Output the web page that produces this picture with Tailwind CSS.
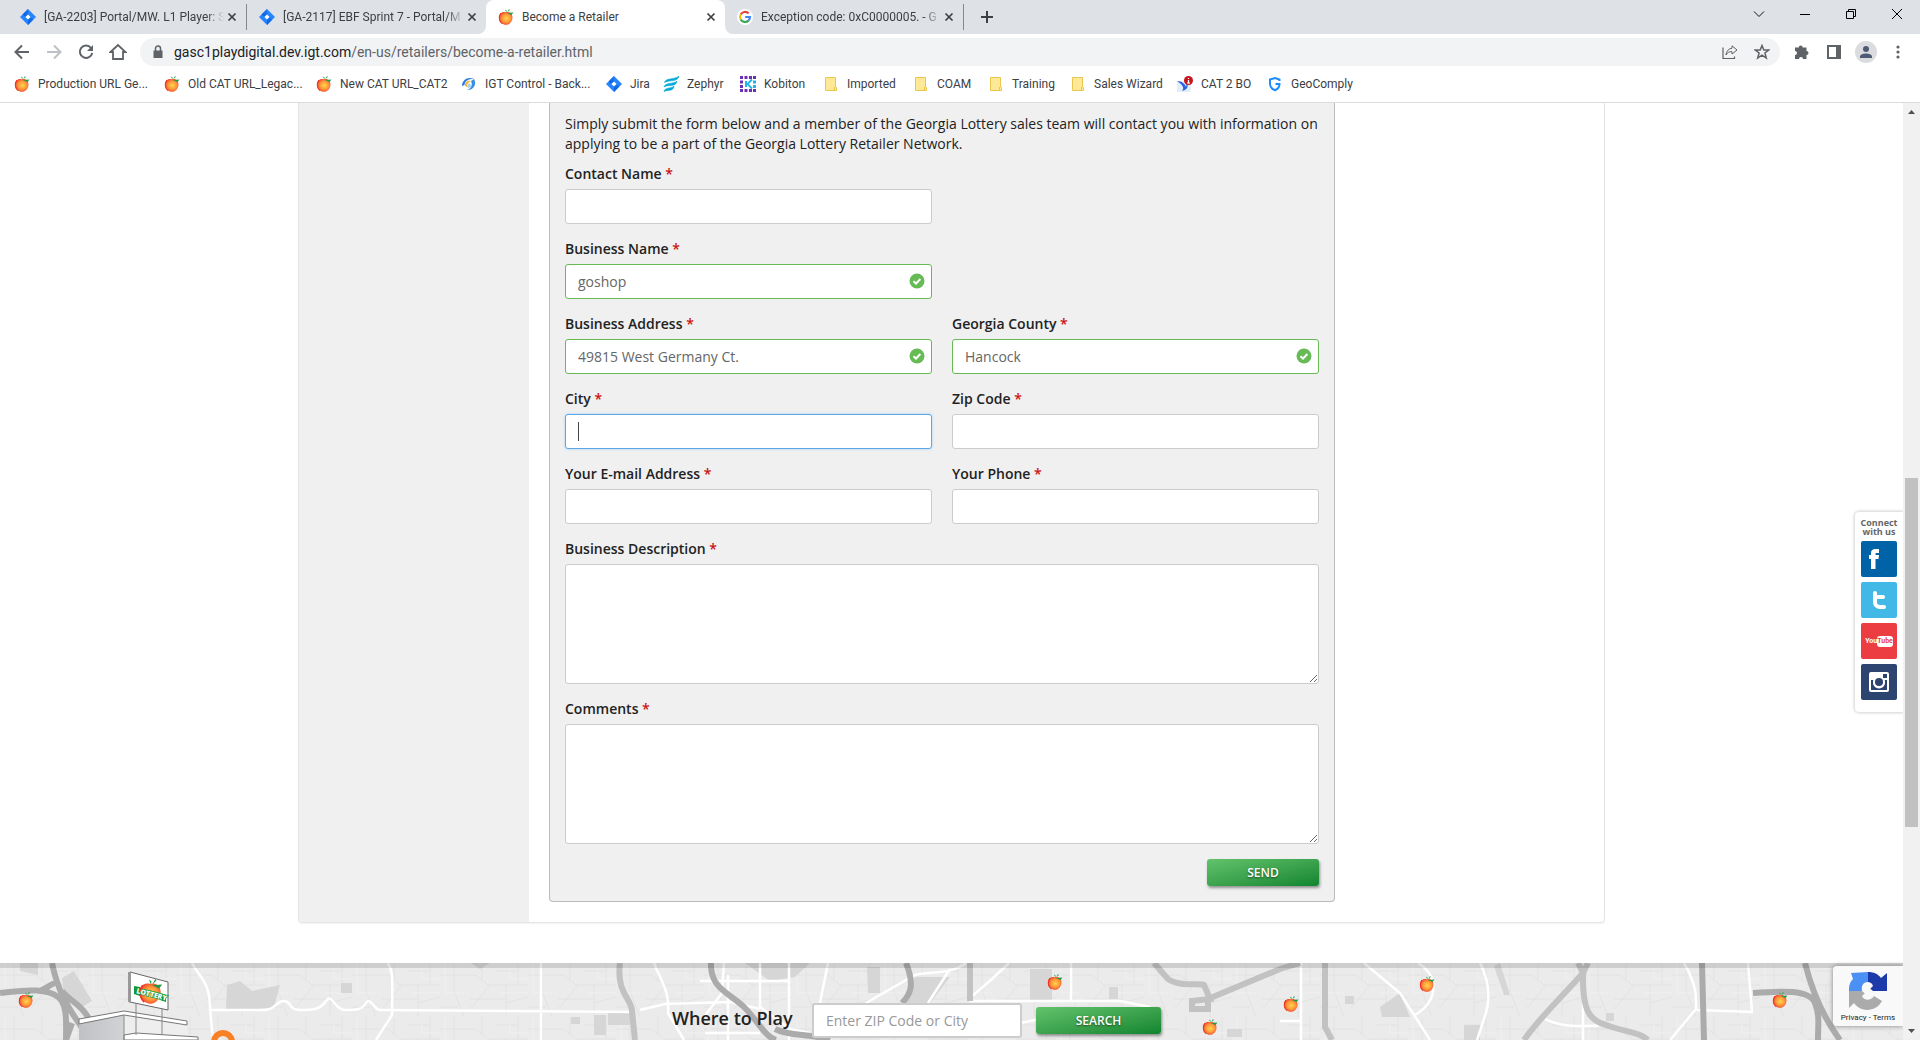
<!DOCTYPE html>
<html lang="en">
<head>
<meta charset="utf-8">
<meta name="viewport" content="width=device-width, initial-scale=1">
<title>Become a Retailer</title>
<script src="https://cdn.jsdelivr.net/npm/@tailwindcss/browser@4"></script>
</head>
<body class="h-screen flex flex-col overflow-hidden bg-white font-['Open_Sans',sans-serif] text-sm text-[#222]">

<svg class="absolute size-0" aria-hidden="true">
  <defs>
    <radialGradient id="peachFill" cx="55%" cy="50%" r="55%">
      <stop offset="0" stop-color="#ffd54a"/><stop offset=".55" stop-color="#ff9a3c"/><stop offset="1" stop-color="#f0442c"/>
    </radialGradient>
    <linearGradient id="wall" x1="0" x2="1"><stop offset="0" stop-color="#bfc1c4"/><stop offset="1" stop-color="#ececee"/></linearGradient>
    <linearGradient id="jiraFold" x1="0" x2="1" y1="1" y2="0"><stop offset="0" stop-color="#0052cc"/><stop offset="1" stop-color="#2684ff"/></linearGradient>
    <symbol id="peach" viewBox="0 0 16 16">
      <path d="M8 3.2C11.500 2 14.500 4.500 14.500 8.500S11.500 15.800 8 15.800 .8 13 .8 8.700 4 2 8 3.200Z" fill="url(#peachFill)"/>
      <path d="M3 4C.8 7 .8 12 4 14.800" stroke="#ee3124" fill="none"/>
      <path d="M9 4 15.500 3.500 13.500 6ZM8.300 3.500 7 .5 8.600 1.500ZM9.300 3.300 11 0l.8 1Z" fill="#1f9d45"/>
    </symbol>
    <symbol id="jira" viewBox="0 0 16 16">
      <path d="M8 0 16 8 8 16 0 8Z" fill="#2684ff"/>
      <path d="M8 0 8 5.400 5.400 8 2.600 5.400ZM8 16V10.600L10.600 8 13.400 10.600Z" fill="url(#jiraFold)"/>
      <path d="M8 5.400 10.600 8 8 10.600 5.400 8Z" fill="#fff"/>
    </symbol>
    <symbol id="folder" viewBox="0 0 16 16">
      <path d="M2.500 1.500H12.500V11L13.500 11.500V14.500H2.500Z" fill="#ffe896" stroke="#eac54f"/>
      <path d="M11.500 11V14.500" stroke="#eac54f"/>
    </symbol>
    <symbol id="close" viewBox="0 0 16 16"><path d="M4.500 4.500 11.500 11.500M11.500 4.500 4.500 11.500" stroke="#3c4043" stroke-width="1.700"/></symbol>
    <symbol id="valid" viewBox="0 0 16 16"><circle cx="8" cy="8" r="7.500" fill="#66bb55"/><path d="M4.500 8.200 7 10.500 11.400 6" stroke="#fff" stroke-width="2" fill="none"/></symbol>
  </defs>
</svg>

<!-- Browser tabs -->
<header class="shrink-0 border-b border-[#dadce0] font-['Roboto',sans-serif] text-xs text-[#3c4043]">
  <div class="flex h-[34px] items-stretch bg-[#dee1e6] pl-2">
    <div class="mt-1 flex h-[26px] w-[239px] items-center border-r border-[#85888c] pl-3 pr-1.5">
      <svg class="mr-2 size-4 shrink-0"><use href="#jira"/></svg>
      <span class="flex-1 overflow-hidden whitespace-nowrap mask-r-from-90%">[GA-2203] Portal/MW. L1 Player: S</span>
      <button aria-label="Close tab"><svg class="size-4"><use href="#close"/></svg></button>
    </div>
    <div class="flex w-[239px] items-center pl-3 pr-1.5">
      <svg class="mr-2 size-4 shrink-0"><use href="#jira"/></svg>
      <span class="flex-1 overflow-hidden whitespace-nowrap mask-r-from-90%">[GA-2117] EBF Sprint 7 - Portal/M</span>
      <button aria-label="Close tab"><svg class="size-4"><use href="#close"/></svg></button>
    </div>
    <div class="relative flex w-[239px] items-center rounded-t-lg bg-white pl-3 pr-1.5">
      <svg class="absolute -left-2 bottom-0 size-2" viewBox="0 0 8 8"><path d="M8 0V8H0A8 8 0 0 0 8 0Z" fill="#fff"/></svg>
      <svg class="absolute -right-2 bottom-0 size-2" viewBox="0 0 8 8"><path d="M0 0V8H8A8 8 0 0 1 0 0Z" fill="#fff"/></svg>
      <svg class="mr-2 size-4 shrink-0"><use href="#peach"/></svg>
      <span class="flex-1 overflow-hidden whitespace-nowrap">Become a Retailer</span>
      <button aria-label="Close tab"><svg class="size-4"><use href="#close"/></svg></button>
    </div>
    <div class="mt-1 flex h-[26px] w-[239px] items-center border-r border-[#85888c] pl-3 pr-1.5">
      <svg class="mr-2 size-4 shrink-0" viewBox="0 0 16 16"><circle cx="8" cy="8" r="8" fill="#fff"/><g fill="none" stroke-width="2.200"><path d="M11.600 4.400A5 5 0 0 0 3.700 5.500" stroke="#ea4335"/><path d="M3.700 5.500a5 5 0 0 0 0 5" stroke="#fbbc05"/><path d="M3.700 10.500a5 5 0 0 0 7.800 1.100" stroke="#34a853"/><path d="M11.500 11.600A5 5 0 0 0 13 8H8.200" stroke="#4285f4"/></g></svg>
      <span class="flex-1 overflow-hidden whitespace-nowrap mask-r-from-90%">Exception code: 0xC0000005. - G</span>
      <button aria-label="Close tab"><svg class="size-4"><use href="#close"/></svg></button>
    </div>
    <button class="flex w-[46px] items-center justify-center" aria-label="New tab"><svg class="size-3.5" viewBox="0 0 14 14"><path d="M7 1V13M1 7H13" stroke="#3c4043" stroke-width="2"/></svg></button>
    <div class="ml-auto flex h-7">
      <button class="flex w-[46px] items-center justify-center" aria-label="Search tabs"><svg class="size-3" viewBox="0 0 12 12"><path d="M1 3.500 6 8.500 11 3.500" stroke="#111" fill="none"/></svg></button>
      <button class="flex w-[46px] items-center justify-center" aria-label="Minimize"><svg class="size-3" viewBox="0 0 12 12"><path d="M1 6.500H11" stroke="#000"/></svg></button>
      <button class="flex w-[46px] items-center justify-center" aria-label="Restore"><svg class="size-3" viewBox="0 0 12 12"><path d="M1.500 3.500H8.500V10.500H1.500ZM3.500 3.500V1.500H10.500V8.500H8.500" stroke="#000" fill="none"/></svg></button>
      <button class="flex w-[46px] items-center justify-center" aria-label="Close"><svg class="size-3" viewBox="0 0 12 12"><path d="M1 1 11 11M11 1 1 11" stroke="#000"/></svg></button>
    </div>
  </div>

  <!-- Toolbar -->
  <div class="flex h-9 items-center bg-white pl-1.5 pr-1.5">
    <button class="flex w-8 justify-center" aria-label="Back"><svg class="size-4" viewBox="0 0 16 16"><path d="M15 8H2.500M8 1.500 1.500 8 8 14.500" stroke="#5f6368" stroke-width="2" fill="none"/></svg></button>
    <button class="flex w-8 justify-center" aria-label="Forward"><svg class="size-4" viewBox="0 0 16 16"><path d="M1 8H13.500M8 1.500 14.500 8 8 14.500" stroke="#bdc1c6" stroke-width="2" fill="none"/></svg></button>
    <button class="flex w-8 justify-center" aria-label="Reload"><svg class="size-4" viewBox="0 0 16 16"><path d="M13 4A6.200 6.200 0 1 0 14.200 8.800" stroke="#5f6368" stroke-width="2" fill="none"/><path d="M15 1V7H9Z" fill="#5f6368"/></svg></button>
    <button class="flex w-8 justify-center" aria-label="Home"><svg class="size-[18px]" viewBox="0 0 18 18"><path d="M1.500 9 9 2 16.500 9H14V16H4V9Z" stroke="#5f6368" stroke-width="1.800" fill="none"/></svg></button>
    <div class="ml-1.5 flex h-7 flex-1 items-center rounded-full bg-[#f1f3f4] pl-3 pr-0.5">
      <svg class="h-3.5 w-3" viewBox="0 0 12 14"><path d="M1.500 5.500H10.500V13H1.500Z" fill="#5f6368"/><path d="M3.500 6V3.500a2.500 2.500 0 0 1 5 0V6" stroke="#5f6368" stroke-width="1.500" fill="none"/></svg>
      <div class="ml-2.5 flex-1 text-sm text-[#5f6368]" role="textbox" aria-label="Address"><span class="text-[#202124]">gasc1playdigital.dev.igt.com</span>/en-us/retailers/become-a-retailer.html</div>
      <button class="flex w-8 justify-center" aria-label="Share"><svg class="size-4" viewBox="0 0 16 16"><path d="M1 3.500V14.500H12.500V12.500" stroke="#5f6368" stroke-width="1.200" fill="none"/><path d="M10 1.800 15 6 10 10V7.700C7.500 7.500 5.500 8.300 4 11 4.200 7.500 6.500 4.500 10 4.200Z" stroke="#5f6368" fill="none"/></svg></button>
      <button class="flex w-8 justify-center" aria-label="Bookmark"><svg class="size-4" viewBox="0 0 16 16"><path d="M8 1.500 9.800 6H14.700L10.900 9 12.300 14 8 11.100 3.700 14 5.100 9 1.300 6H6.200Z" stroke="#5f6368" stroke-width="1.500" fill="none"/></svg></button>
    </div>
    <div class="flex pl-1.5">
      <button class="flex w-8 items-center justify-center" aria-label="Extensions"><svg class="size-4" viewBox="0 0 16 16"><path d="M1 3.500H4.700A2 2 0 1 1 8.700 3.500H12.500V7A2 2 0 1 1 12.500 11V15H9A2 2 0 0 0 5 15H1V11A2 2 0 0 0 1 7Z" fill="#5f6368"/></svg></button>
      <button class="flex w-8 items-center justify-center" aria-label="Side panel"><svg class="size-3.5" viewBox="0 0 14 14"><path d="M0 0H14V14H0ZM2 2V12H9V2Z" fill="#5f6368" fill-rule="evenodd"/></svg></button>
      <button class="flex w-8 justify-center" aria-label="Profile"><svg class="size-[22px]" viewBox="0 0 22 22"><circle cx="11" cy="11" r="11" fill="#dadce0"/><circle cx="11" cy="8" r="3" fill="#4d5a73"/><path d="M5 17V15.500C5 13.200 9 12.400 11 12.400S17 13.200 17 15.500V17Z" fill="#4d5a73"/></svg></button>
      <button class="flex w-8 items-center justify-center" aria-label="Menu"><svg class="h-4 w-1" viewBox="0 0 4 16"><g fill="#5f6368"><circle cx="2" cy="3" r="1.600"/><circle cx="2" cy="8" r="1.600"/><circle cx="2" cy="13" r="1.600"/></g></svg></button>
    </div>
  </div>

  <!-- Bookmarks -->
  <nav class="flex h-8 items-center bg-white pb-1 pl-3.5 whitespace-nowrap">
    <a href="#" class="flex w-[150px] items-center gap-2"><svg class="size-4"><use href="#peach"/></svg>Production URL Ge...</a>
    <a href="#" class="flex w-[152px] items-center gap-2"><svg class="size-4"><use href="#peach"/></svg>Old CAT URL_Legac...</a>
    <a href="#" class="flex w-[145px] items-center gap-2"><svg class="size-4"><use href="#peach"/></svg>New CAT URL_CAT2</a>
    <a href="#" class="flex w-[145px] items-center gap-2"><svg class="size-4" viewBox="0 0 16 16"><path d="M1 10C1 4 7 0 13 3 7 2.500 4 5 3.500 9Z" fill="#2a7de1"/><path d="M4 10C3.500 6 7 4 10 5 7 6 6 8 6 11Z" fill="#f9b233"/><path d="M13 3C16 8 13 15 5 14 10 13.500 12 9 10 5Z" fill="#3a8ee0"/><path d="M8 7 10.500 10 8 12 6 11Z" fill="#9fd0f5"/></svg>IGT Control - Back...</a>
    <a href="#" class="flex w-[57px] items-center gap-2"><svg class="size-4"><use href="#jira"/></svg>Jira</a>
    <a href="#" class="flex w-[77px] items-center gap-2"><svg class="size-4" viewBox="0 0 16 16"><path d="M1.500 6.500C2.500 1.500 12 4 16 0 15 6.500 6 3.500 1.500 6.500ZM1 11C2.500 6 10 8.500 14 5.200 13 11.500 5 8 1 11ZM1 15.500C2 11 7.500 13 11 10.200 10 16 5 13.300 1 15.500Z" fill="#00a9d8" stroke="#00a9d8" stroke-width=".6"/></svg>Zephyr</a>
    <a href="#" class="flex w-[83px] items-center gap-2"><svg class="size-4" viewBox="0 0 16 16"><path d="M0 0H3V3H0ZM4.500 0H7.500V3H4.500ZM9 0H12V3H9ZM0 4.500H3V7.500H0ZM0 9H3V12H0ZM0 13H3V16H0ZM4.500 13H7.500V16H4.500ZM9 13H12V16H9ZM13 13H16V16H13ZM13 0H16V3H13Z" fill="#6b2fb3"/><path d="M5 5H7V11H5ZM13 4.500H16V7.500H13ZM13 9H16V12H13Z" fill="#22b5ea"/><path d="M12 3.500 7.500 8 12 12.500" stroke="#22b5ea" stroke-width="1.800" fill="none"/></svg>Kobiton</a>
    <a href="#" class="flex w-[90px] items-center gap-2"><svg class="size-4"><use href="#folder"/></svg>Imported</a>
    <a href="#" class="flex w-[75px] items-center gap-2"><svg class="size-4"><use href="#folder"/></svg>COAM</a>
    <a href="#" class="flex w-[82px] items-center gap-2"><svg class="size-4"><use href="#folder"/></svg>Training</a>
    <a href="#" class="flex w-[107px] items-center gap-2"><svg class="size-4"><use href="#folder"/></svg>Sales Wizard</a>
    <a href="#" class="flex w-[90px] items-center gap-2"><svg class="size-4" viewBox="0 0 16 16"><path d="M0 5H14V16H0Z" fill="#e4eefb"/><path d="M0 5C5 5 8 8 9 11 10 8 9 6 8 5 12 7 12 14 5 15 8 12 5 8 0 5Z" fill="#2b62e3"/><circle cx="11.500" cy="4.500" r="4.500" fill="#c4161c"/><path d="M11.500 2V3M11.500 4V7M10.300 7H12.700" stroke="#fff" stroke-width="1.300"/></svg>CAT 2 BO</a>
    <a href="#" class="flex items-center gap-2"><svg class="size-4" viewBox="0 0 16 16"><path d="M12.500 5V3.500L8 2 3 3.500V8C3 11 5 13 8 14.200 11 13 12.500 11 12.500 8H8.500" stroke="#1a8cff" stroke-width="2" fill="none"/></svg>GeoComply</a>
  </nav>
</header>

<div class="flex min-h-0 flex-1">
  <div class="relative flex min-w-0 flex-1 flex-col overflow-hidden">

    <main class="mx-auto flex w-full max-w-[1307px] shrink-0 rounded-b border border-t-0 border-[#e4e4e4] shadow-[0_1px_1px_#f4f4f4]">
      <aside class="w-[230px] shrink-0 rounded-bl bg-[#f0f0f0]"></aside>
      <div class="min-w-0 flex-1 pb-5 pl-5">
        <form class="w-[786px] max-w-full rounded-b border border-t-0 border-[#bbb] bg-[#f0f0f0] px-[15px] pt-[11px] pb-[15px]">
          <p class="mb-2.5 leading-5">Simply submit the form below and a member of the Georgia Lottery sales team will contact you with information on applying to be a part of the Georgia Lottery Retailer Network.</p>
          <div class="grid grid-cols-2 gap-x-5 gap-y-[15px]">
            <div class="flex flex-col gap-[5px]">
              <label for="contact" class="font-semibold leading-5">Contact Name <span class="text-[#c11]">*</span></label>
              <input id="contact" class="h-[35px] rounded-[3px] border border-[#ccc] bg-white px-3 text-[#666]">
            </div>
            <div class="relative col-start-1 flex flex-col gap-[5px]">
              <label for="business" class="font-semibold leading-5">Business Name <span class="text-[#c11]">*</span></label>
              <input id="business" value="goshop" class="h-[35px] rounded-[3px] border border-[#66bb55] bg-white pl-3 pr-8 text-[#666]">
              <svg class="absolute right-[7px] bottom-2.5 size-4"><use href="#valid"/></svg>
            </div>
            <div class="relative col-start-1 flex flex-col gap-[5px]">
              <label for="address" class="font-semibold leading-5">Business Address <span class="text-[#c11]">*</span></label>
              <input id="address" value="49815 West Germany Ct." class="h-[35px] rounded-[3px] border border-[#66bb55] bg-white pl-3 pr-8 text-[#666]">
              <svg class="absolute right-[7px] bottom-2.5 size-4"><use href="#valid"/></svg>
            </div>
            <div class="relative flex flex-col gap-[5px]">
              <label for="county" class="font-semibold leading-5">Georgia County <span class="text-[#c11]">*</span></label>
              <input id="county" value="Hancock" class="h-[35px] rounded-[3px] border border-[#66bb55] bg-white pl-3 pr-8 text-[#666]">
              <svg class="absolute right-[7px] bottom-2.5 size-4"><use href="#valid"/></svg>
            </div>
            <div class="relative flex flex-col gap-[5px]">
              <label for="city" class="font-semibold leading-5">City <span class="text-[#c11]">*</span></label>
              <input id="city" class="h-[35px] rounded-[3px] border border-[#5aa9e6] bg-white px-3 text-[#666] shadow-[0_0_3px_#a8d2f3]">
              <span class="absolute left-[13px] bottom-2 h-[19px] w-px bg-[#444]"></span>
            </div>
            <div class="flex flex-col gap-[5px]">
              <label for="zip" class="font-semibold leading-5">Zip Code <span class="text-[#c11]">*</span></label>
              <input id="zip" class="h-[35px] rounded-[3px] border border-[#ccc] bg-white px-3 text-[#666]">
            </div>
            <div class="flex flex-col gap-[5px]">
              <label for="email" class="font-semibold leading-5">Your E-mail Address <span class="text-[#c11]">*</span></label>
              <input id="email" class="h-[35px] rounded-[3px] border border-[#ccc] bg-white px-3 text-[#666]">
            </div>
            <div class="flex flex-col gap-[5px]">
              <label for="phone" class="font-semibold leading-5">Your Phone <span class="text-[#c11]">*</span></label>
              <input id="phone" class="h-[35px] rounded-[3px] border border-[#ccc] bg-white px-3 text-[#666]">
            </div>
            <div class="col-span-2 flex flex-col gap-[5px]">
              <label for="description" class="font-semibold leading-5">Business Description <span class="text-[#c11]">*</span></label>
              <textarea id="description" class="h-[120px] resize rounded-[3px] border border-[#ccc] bg-white px-3 py-2"></textarea>
            </div>
            <div class="col-span-2 flex flex-col gap-[5px]">
              <label for="comments" class="font-semibold leading-5">Comments <span class="text-[#c11]">*</span></label>
              <textarea id="comments" class="h-[120px] resize rounded-[3px] border border-[#ccc] bg-white px-3 py-2"></textarea>
            </div>
            <button type="button" class="col-span-2 h-[27px] w-28 justify-self-end rounded-[3px] bg-linear-to-br from-[#62c36c] to-[#0a8530] text-xs font-semibold text-white shadow-[1px_2px_3px_rgba(0,0,0,0.4)] text-shadow-[0_1px_2px_rgba(0,0,0,0.5)]">SEND</button>
          </div>
        </form>
      </div>
    </main>

    <!-- Where to play -->
    <section class="relative mt-10 min-h-0 flex-1 overflow-hidden bg-[#ebebeb]">
      <svg class="absolute top-0 left-0 h-[77px] w-[1903px]" viewBox="0 0 1903 77" fill="none">
        <defs>
          <pattern id="streets" width="88" height="54" patternUnits="userSpaceOnUse">
            <path d="M0 12H36L48 22H88M14 0V28L24 54M42 0V18M66 22V54M30 36H66M78 0V22M50 22 30 46M66 40 88 34M0 44H18M55 8H78" stroke="#e2e2e2"/>
            <path d="M5 0V30H24M60 30H88M70 8V16H88" stroke="#f0f0f0"/>
          </pattern>
        </defs>
        <rect width="1903" height="77" fill="url(#streets)"/>
        <!-- parks and blocks -->
        <g fill="#d6d6d6">
          <path d="M62 15 74 8 92 38 82 44 64 32ZM227 22 240 18 252 28 280 22 274 44 246 48 226 46ZM341 20H352V30H341ZM20 0H38V12L20 8ZM471 0H490L480 6ZM594 52H606V72H594ZM608 50H630V62H608ZM571 54H580V61H571ZM745 0H810L795 14 770 18ZM915 14H950L930 40H905ZM1030 6H1052V38H1030ZM1109 24H1118V36H1109ZM867 4H880V30H868ZM1227 66H1242V74H1227ZM1345 33H1354V41H1345ZM1380 44 1400 30 1410 54 1382 54ZM1494 3 1500 0 1510 32H1504ZM1464 62H1480V77H1464ZM1606 50H1614V58H1606Z"/>
        </g>
        <!-- minor roads -->
        <g stroke="#fff" stroke-width="2.500">
          <path d="M192 0C200 16 210 18 210 46L213 77M210 47H265C275 47 276 38 284 38S288 47 300 47 320 47 326 38 334 47 345 47 362 47 366 40 374 47 380 47L632 49M388 0C394 10 392 18 392 52L376 77M541 0V77"/>
          <path d="M654 0C662 20 670 30 668 50L684 77M640 47 665 41 730 39 760 46M724 0 722 30 704 54M760 0V44L790 66 810 70M700 18H790M789 0V77M728 12V77M705 70H760"/>
          <path d="M966 0C950 12 930 8 915 12L866 40M950 6 928 40M1009 0 992 16 971 34V38H1120L1150 44M1071 0V38M972 38 968 0M1301 0V77M1280 58H1301M1020 60 1050 54M828 0 816 60"/>
          <path d="M1364 0 1400 30 1430 77M1415 52C1438 38 1440 14 1418 0M1480 0C1490 20 1490 36 1486 50L1477 77M1545 56C1560 64 1580 64 1606 62M1583 40V77M1684 0C1698 24 1696 36 1696 46L1670 77M1697 47 1753 49M1748 0 1752 48"/>
        </g>
        <!-- highways -->
        <g stroke="#c2c2c2" stroke-width="6">
          <path d="M620 0C616 30 632 36 632 48L635 77M970 0V38M1154 0 1168 16C1178 24 1200 20 1204 22L1210 36 1192 38V46H1208V36L1280 6 1300 0"/>
          <path d="M1325 0V64L1332 77M1588 0 1583 10C1582 54 1592 58 1612 64S1640 70 1648 77M1578 0 1583 10C1560 36 1540 54 1524 77"/>
        </g>
        <g stroke="#ababab" stroke-width="6">
          <path d="M52 0C56 20 64 44 92 77M0 30C30 26 48 26 58 34S66 60 66 77M62 28C70 40 90 42 96 77M40 28 58 18M72 60 66 77M711 0C710 26 730 30 744 44S765 74 776 77M775 66C790 74 810 70 830 77M906 0C914 20 912 30 902 40M1702 0 1704 77M1753 30C1780 28 1810 26 1815 40S1818 60 1818 77M1805 0C1810 20 1820 50 1840 77"/>
        </g>
        <!-- lottery store -->
        <path d="M79 57 124 48 187 58V77H79Z" fill="url(#wall)"/>
        <path d="M124 51 187 61V77H124Z" fill="#eee"/>
        <path d="M79 56 124 48 187 58V62L124 52 79 61ZM124 72 136 70 198 74V77H124Z" fill="#fff" stroke="#777"/>
        <path d="M124 52V77M136 40V72M162 45V72" stroke="#888"/>
        <path d="M130 9 168 19V47L130 39Z" fill="#fff" stroke="#666"/>
        <path d="M128 9V39L131 40V9Z" fill="#999"/>
        <use href="#peach" x="138" y="16" width="25" height="25"/>
        <path d="M134 23 140 24V33L134 31ZM160 30 166 32V39L160 37Z" fill="#0e9b3c"/>
        <text x="136" y="30" transform="rotate(14 136 30)" fill="#fff" stroke="#0e9b3c" stroke-width="1.500" paint-order="stroke" font-family="Open Sans, sans-serif" font-size="7" font-weight="800">LOTTERY</text>
        <circle cx="223" cy="79" r="9" stroke="#f98125" stroke-width="6"/>
        <rect width="1903" height="5" fill="#000" fill-opacity=".12"/>
        <use href="#peach" x="18" y="29" width="16" height="16"/>
        <use href="#peach" x="1047" y="11" width="16" height="16"/>
        <use href="#peach" x="1202" y="56" width="16" height="16"/>
        <use href="#peach" x="1283" y="33" width="16" height="16"/>
        <use href="#peach" x="1419" y="13" width="16" height="16"/>
        <use href="#peach" x="1772" y="29" width="16" height="16"/>
      </svg>
      <form class="relative mx-auto flex w-full max-w-[1307px] items-start pt-10 pl-[374px]">
        <label for="where" class="w-[140px] text-lg leading-[30px] font-semibold whitespace-nowrap">Where to Play</label>
        <input id="where" placeholder="Enter ZIP Code or City" class="h-[35px] w-[210px] rounded-[3px] border-2 border-[#ccc] bg-white px-3 text-[#666] placeholder:text-[#999]">
        <button type="button" class="mt-1 ml-3.5 h-[27px] w-[125px] rounded-[3px] bg-linear-to-br from-[#62c36c] to-[#0a8530] text-xs font-semibold text-white shadow-[1px_2px_3px_rgba(0,0,0,0.4)] text-shadow-[0_1px_2px_rgba(0,0,0,0.5)]">SEARCH</button>
      </form>
    </section>

    <!-- Social links -->
    <div class="absolute top-[409px] right-0 flex h-[200px] w-12 flex-col items-center gap-[5px] rounded-l bg-white pt-1.5 shadow-[0_0_3px_1px_rgba(0,0,0,0.18)]">
      <div class="text-center text-[9px] leading-[9px] font-bold text-[#666]">Connect<br>with us</div>
      <a href="#" aria-label="Facebook" class="size-9 rounded-xs bg-[#0063a7]"><svg viewBox="0 0 36 36"><path d="M10 28V18H8V14H10V12C10 9 12 8 14 8H18V12H15.500C14.800 12 14.500 12.500 14.500 13V14H18L17.500 18H14.500V28Z" fill="#fff"/></svg></a>
      <a href="#" aria-label="Twitter" class="size-9 rounded-xs bg-[#41b8e6]"><svg viewBox="0 0 36 36"><path d="M14 11V20C14 23 16 25 19 25H23" stroke="#fff" stroke-width="4" stroke-linecap="round" fill="none"/><path d="M14 15H22" stroke="#fff" stroke-width="4" stroke-linecap="round"/></svg></a>
      <a href="#" aria-label="YouTube" class="flex size-9 items-center justify-center rounded-xs bg-[#eb3d42] font-['Roboto',sans-serif] text-[7px] leading-[11px] font-bold text-white">You<span class="rounded-[3px] bg-white text-[#eb3d42]">Tube</span></a>
      <a href="#" aria-label="Instagram" class="size-9 rounded-xs bg-[#2e4470]"><svg viewBox="0 0 36 36"><path d="M10 8H26Q28 8 28 10V26Q28 28 26 28H10Q8 28 8 26V10Q8 8 10 8Z" fill="#fff"/><path d="M10 16H12.500A6 6 0 1 0 23.500 16H26V26H10ZM22 10H26V14H22Z" fill="#2e4470"/><circle cx="18" cy="18" r="5.800" fill="#fff"/><circle cx="18" cy="18" r="4" fill="#2e4470"/></svg></a>
    </div>

    <!-- reCAPTCHA badge -->
    <div class="absolute right-0 bottom-3.5 flex h-[60px] w-[70px] flex-col items-center rounded-l-sm bg-[#f9f9f9] pt-1.5 shadow-[0_0_5px_gray]">
      <svg class="size-[38px]" viewBox="0 0 38 38">
        <path d="M19 0V10C14 10 12 14 13 19H0C0 13 1 10 4 7L2 1Z" fill="#4a90f5"/>
        <path d="M19 0C25 0 29 2 32 6L38 1V19H19L24 14C23 11 21 10 19 10Z" fill="#1c3aa9"/>
        <path d="M0 19H18L13 24C15 29 22 29 25 24L33 29C27 40 12 41 5 31L0 36Z" fill="#ababab"/>
        <path d="M13 19 18 14 24 19 19 24Z" fill="#f9f9f9"/>
      </svg>
      <div class="font-['Roboto',sans-serif] text-[8px] leading-4 whitespace-nowrap text-[#222]"><a href="#">Privacy</a> - <a href="#">Terms</a></div>
    </div>
  </div>

  <!-- Scrollbar -->
  <div class="flex w-[17px] shrink-0 flex-col items-center bg-[#f1f1f1]" aria-hidden="true">
    <svg class="size-[17px]" viewBox="0 0 17 17"><path d="M5 11 8.500 7 12 11Z" fill="#505050"/></svg>
    <div class="grow-[358]"></div>
    <div class="w-[13px] grow-[349] bg-[#c1c1c1]"></div>
    <div class="grow-[196]"></div>
    <svg class="size-[17px]" viewBox="0 0 17 17"><path d="M5 6 8.500 10 12 6Z" fill="#505050"/></svg>
  </div>
</div>
</body>
</html>
